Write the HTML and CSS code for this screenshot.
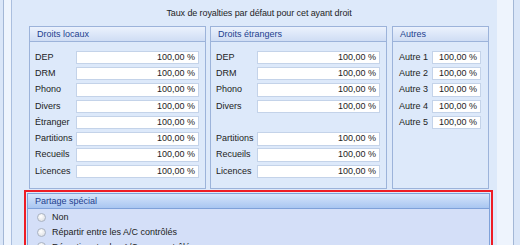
FILE: index.html
```html
<!DOCTYPE html>
<html>
<head>
  <title>Taux de royalties</title>
  <link rel="stylesheet" href="styles.css">
</head>
<body>
  <div class="shell">
    <div class="panel">
      <p class="title">Taux de royalties par défaut pour cet ayant droit</p>

      <div class="groups">
        <div class="group group-wide">
          <div class="group-head">Droits locaux</div>
          <div class="group-body rates">
            <label>DEP</label><div class="rate">100,00 %</div>
            <label>DRM</label><div class="rate">100,00 %</div>
            <label>Phono</label><div class="rate">100,00 %</div>
            <label>Divers</label><div class="rate">100,00 %</div>
            <label>Étranger</label><div class="rate">100,00 %</div>
            <label>Partitions</label><div class="rate">100,00 %</div>
            <label>Recueils</label><div class="rate">100,00 %</div>
            <label>Licences</label><div class="rate">100,00 %</div>
          </div>
        </div>

        <div class="group group-wide">
          <div class="group-head">Droits étrangers</div>
          <div class="group-body rates">
            <label>DEP</label><div class="rate">100,00 %</div>
            <label>DRM</label><div class="rate">100,00 %</div>
            <label>Phono</label><div class="rate">100,00 %</div>
            <label>Divers</label><div class="rate">100,00 %</div>
            <span></span><span></span>
            <label>Partitions</label><div class="rate">100,00 %</div>
            <label>Recueils</label><div class="rate">100,00 %</div>
            <label>Licences</label><div class="rate">100,00 %</div>
          </div>
        </div>

        <div class="group group-small">
          <div class="group-head">Autres</div>
          <div class="group-body rates rates-small">
            <label>Autre 1</label><div class="rate">100,00 %</div>
            <label>Autre 2</label><div class="rate">100,00 %</div>
            <label>Autre 3</label><div class="rate">100,00 %</div>
            <label>Autre 4</label><div class="rate">100,00 %</div>
            <label>Autre 5</label><div class="rate">100,00 %</div>
          </div>
        </div>
      </div>

      <div class="highlight">
        <div class="group special">
          <div class="group-head">Partage spécial</div>
          <div class="group-body options">
            <div class="option"><span class="radio"></span>Non</div>
            <div class="option"><span class="radio"></span>Répartir entre les A/C contrôlés</div>
            <div class="option"><span class="radio"></span>Répartir entre les A/C non contrôlés</div>
          </div>
        </div>
      </div>
    </div>
  </div>
</body>
</html>
```

FILE: styles.css
```css
body, p {
  margin: 0;
  padding: 0;
}

body {
  font-family: "Liberation Sans", Arial, sans-serif;
  font-size: 9px;
  color: #1e1e1e;
  background-color: #dae6f8;
  height: 245px;
  overflow: hidden;
}

.shell {
  margin-left: 3px;
  width: 502px;
  height: 245px;
  border-left: 1px solid #a3b7d6;
  border-right: 1px solid #a3b7d6;
  background-color: #eef4fd;
  padding-left: 7px;
}

.panel {
  width: 485px;
  height: 245px;
  border-left: 1px solid #aabfdf;
  background-color: #dde9fa;
}

.title {
  padding-top: 7px;
  line-height: 12px;
  text-align: center;
  margin-left: 17px;
  width: 460px;
  margin-bottom: 7px;
  letter-spacing: -0.1px;
}

.groups {
  display: flex;
  gap: 4px;
  margin-left: 17px;
  width: 460px;
  height: 163px;
}

.group {
  border: 1px solid #9cb3da;
  box-sizing: border-box;
}

.group-wide {
  width: 177px;
}

.group-small {
  width: 97px;
  margin-left: 1px;
}

.group-head {
  height: 14px;
  line-height: 14px;
  padding-left: 7px;
  color: #233f8f;
  background: linear-gradient(#ebf2fd, #cfddf4);
  border-bottom: 1px solid #9cb3da;
}

.rates {
  display: grid;
  grid-template-columns: 41px 1fr;
  grid-auto-rows: 13.5px;
  row-gap: 2.8px;
  padding: 8.7px 6px 0 5px;
}

.rates-small {
  grid-template-columns: 33px 1fr;
  padding-left: 6px;
  padding-right: 7px;
}

.rates label {
  line-height: 13.5px;
  color: #222;
}

.rate {
  background-color: #fff;
  border: 1px solid #c4d3e9;
  text-align: right;
  line-height: 11.5px;
  padding-right: 3px;
}

.highlight {
  margin-top: 1px;
  margin-left: 12px;
  width: 463px;
  border: 2px solid #ee1c25;
  padding: 1px;
  height: 80px;
}

.special {
  height: 100%;
  border-color: #7fa1d9;
  background-color: #d4dff8;
}

.special .group-head {
  background: linear-gradient(#d6e5fb, #a9c6f1);
  border-bottom-color: #7fa1d9;
}

.options {
  padding-top: 1px;
  padding-left: 9px;
}

.option {
  height: 14.7px;
  display: flex;
  align-items: center;
  color: #222;
}

.radio {
  width: 7px;
  height: 7px;
  border: 1px solid #aab3c2;
  border-radius: 50%;
  background: radial-gradient(circle at 40% 35%, #ffffff, #d6d9de);
  margin-right: 6px;
}
```
